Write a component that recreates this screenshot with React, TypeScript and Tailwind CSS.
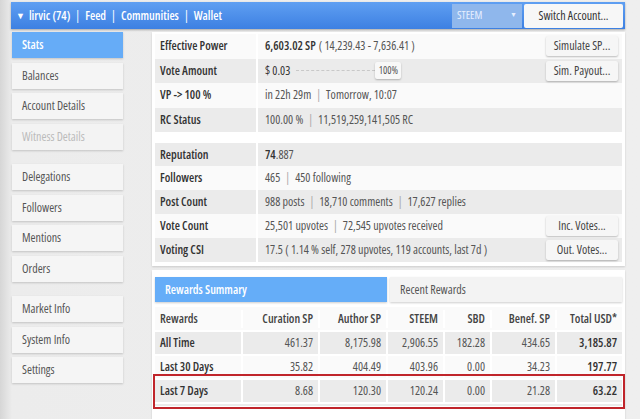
import React from "react";

const FONT = { fontFamily: '"Open Sans", "Liberation Sans", sans-serif' };

const NAV: { label: string; active?: boolean; disabled?: boolean; gap?: boolean }[] = [
  { label: "Stats", active: true },
  { label: "Balances" },
  { label: "Account Details" },
  { label: "Witness Details", disabled: true },
  { label: "Delegations", gap: true },
  { label: "Followers" },
  { label: "Mentions" },
  { label: "Orders" },
  { label: "Market Info", gap: true },
  { label: "System Info" },
  { label: "Settings" },
];

function Sep() {
  return <span className="mx-[5px] text-[#aaa]">|</span>;
}

function Btn({ children }: { children: React.ReactNode }) {
  return (
    <button
      type="button"
      className="flex h-[20px] w-[72px] items-center justify-center rounded-[2px] bg-[#f6f6f6] text-[12px] text-[#444] shadow-[0_1px_2px_rgba(0,0,0,0.25)]"
    >
      {children}
    </button>
  );
}

function StatRow({
  label,
  gray,
  h = "h-[24.5px]",
  children,
  action,
}: {
  label: string;
  gray?: boolean;
  h?: string;
  children: React.ReactNode;
  action?: React.ReactNode;
}) {
  return (
    <div className={`flex ${h} items-center ${gray ? "bg-[#ebebeb]" : "bg-[#fafafa]"}`}>
      <div className="flex h-full w-[103px] shrink-0 items-center border-r-2 border-white pl-[5px] font-semibold text-[#333]">
        {label}
      </div>
      <div className="flex h-full flex-1 items-center whitespace-nowrap pl-[7px] text-[#555] [font-stretch:80%]">
        {children}
      </div>
      {action && <div className="pr-[4px]">{action}</div>}
    </div>
  );
}

const REWARD_COLS = [
  { label: "Curation SP", w: "w-[77px]" },
  { label: "Author SP", w: "w-[68px]" },
  { label: "STEEM", w: "w-[57px]" },
  { label: "SBD", w: "w-[47px]" },
  { label: "Benef. SP", w: "w-[65px]" },
  { label: "Total USD*", w: "flex-1" },
];

const REWARD_ROWS = [
  { label: "All Time", vals: ["461.37", "8,175.98", "2,906.55", "182.28", "434.65", "3,185.87"], gray: true },
  { label: "Last 30 Days", vals: ["35.82", "404.49", "403.96", "0.00", "34.23", "197.77"] },
  { label: "Last 7 Days", vals: ["8.68", "120.30", "120.24", "0.00", "21.28", "63.22"], gray: true },
];

export default function App() {
  return (
    <div
      style={FONT}
      className="relative h-[419px] w-[640px] overflow-hidden bg-[linear-gradient(to_right,#d6d6d6_0px,#ececec_12px,#efefef_100%)] text-[12px] [font-stretch:76%]"
    >
      {/* top bar */}
      <div className="mx-[11px] mt-[2px] flex h-[27px] w-[614px] items-center bg-[linear-gradient(to_bottom,#5f9ff2,#3d80e2)] shadow-[0_1px_2px_rgba(0,0,0,0.3)]">
        <div className="flex flex-1 items-center pl-[5px] text-[12px] font-semibold text-white">
          <span className="mr-[4px] text-[9px]">▼</span>
          <span>lirvic (74)</span>
          <span className="mx-[5px] font-normal">|</span>
          <span>Feed</span>
          <span className="mx-[5px] font-normal">|</span>
          <span>Communities</span>
          <span className="mx-[5px] font-normal">|</span>
          <span>Wallet</span>
        </div>
        <div className="mr-[2px] flex h-[24px] w-[70px] items-center justify-between bg-[#8fb7ec] px-[5px] text-[11px] text-[#e7efff]">
          <span>STEEM</span>
          <span className="text-[7px]">▼</span>
        </div>
        <div className="mr-[2px] flex h-[24px] w-[99px] items-center justify-center rounded-[2px] bg-[#f7f7f7] text-[12px] text-[#333]">
          Switch Account...
        </div>
      </div>

      <div className="mt-[3px] flex">
        {/* sidebar */}
        <div className="ml-[12px] flex w-[111px] flex-col gap-[4.5px]">
          {NAV.map((n) => (
            <div
              key={n.label}
              className={`flex h-[26px] items-center pl-[10px] shadow-[0_1px_2px_rgba(0,0,0,0.18)] ${
                n.gap ? "mt-[10px]" : ""
              } ${
                n.active
                  ? "bg-[#66acf7] font-semibold text-white"
                  : n.disabled
                    ? "bg-[#f3f3f3] text-[#bbb]"
                    : "bg-[#f5f5f5] text-[#555]"
              }`}
            >
              {n.label}
            </div>
          ))}
        </div>

        {/* main */}
        <div className="ml-[29px] flex w-[473px] flex-col gap-[4px]">
          <div className="bg-white px-[3px] pb-[4px] pt-[2px] shadow-[0_1px_2px_rgba(0,0,0,0.15)]">
            <StatRow label="Effective Power" action={<Btn>Simulate SP...</Btn>}>
              <span className="font-semibold text-[#333]">6,603.02 SP</span>
              <span className="ml-[3px]">( 14,239.43 - 7,636.41 )</span>
            </StatRow>
            <StatRow label="Vote Amount" gray action={<Btn>Sim. Payout...</Btn>}>
              <span className="text-[#333]">$ 0.03</span>
              <div className="ml-[6px] h-0 w-[79px] border-t border-dashed border-[#c8c8c8]" />
              <div className="flex h-[17px] w-[26px] items-center justify-center rounded-[2px] bg-[#f8f8f8] text-[10px] text-[#555] shadow-[0_1px_2px_rgba(0,0,0,0.25)]">
                100%
              </div>
            </StatRow>
            <StatRow label="VP -> 100 %">
              in 22h 29m
              <Sep />
              Tomorrow, 10:07
            </StatRow>
            <StatRow label="RC Status" gray>
              100.00 %
              <Sep />
              11,519,259,141,505 RC
            </StatRow>
            <div className="h-[11px]" />
            <StatRow label="Reputation" gray h="h-[23px]">
              <span className="font-semibold text-[#333]">74</span>.887
            </StatRow>
            <StatRow label="Followers" h="h-[24px]">
              465
              <Sep />
              450 following
            </StatRow>
            <StatRow label="Post Count" gray h="h-[24px]">
              988 posts
              <Sep />
              18,710 comments
              <Sep />
              17,627 replies
            </StatRow>
            <StatRow label="Vote Count" h="h-[24px]" action={<Btn>Inc. Votes...</Btn>}>
              25,501 upvotes
              <Sep />
              72,545 upvotes received
            </StatRow>
            <StatRow label="Voting CSI" gray h="h-[24px]" action={<Btn>Out. Votes...</Btn>}>
              17.5 ( 1.14 % self, 278 upvotes, 119 accounts, last 7d )
            </StatRow>
          </div>

          <div className="bg-white px-[3px] pt-[7px] shadow-[0_1px_2px_rgba(0,0,0,0.15)]">
            <div className="flex h-[25px] gap-[3px]">
              <div className="flex w-[232px] items-center bg-[#65adf8] pl-[10px] font-semibold text-white shadow-[0_1px_2px_rgba(0,0,0,0.2)]">
                Rewards Summary
              </div>
              <div className="flex flex-1 items-center bg-[#f3f3f3] pl-[10px] text-[#555] shadow-[0_1px_2px_rgba(0,0,0,0.2)]">
                Recent Rewards
              </div>
            </div>
            <div className="mt-[5px]">
              <div className="flex h-[23px] items-center bg-[#fafafa] font-semibold text-[#444]">
                <div className="w-[88px] border-r-2 border-white pl-[5px]">Rewards</div>
                {REWARD_COLS.map((c) => (
                  <div key={c.label} className={`${c.w} whitespace-nowrap border-r-2 border-white pr-[5px] text-right last:border-r-0`}>
                    {c.label}
                  </div>
                ))}
              </div>
              {REWARD_ROWS.map((r) => (
                <div
                  key={r.label}
                  className={`flex h-[24px] items-center border-t-2 border-white ${r.gray ? "bg-[#ebebeb]" : "bg-[#fafafa]"}`}
                >
                  <div className="flex h-full w-[88px] items-center border-r-2 border-white pl-[5px] font-semibold text-[#333]">
                    {r.label}
                  </div>
                  {r.vals.map((v, i) => (
                    <div
                      key={i}
                      className={`${REWARD_COLS[i].w} flex h-full items-center justify-end border-r-2 border-white pr-[5px] last:border-r-0 ${
                        i === 5 ? "font-semibold text-[#333]" : "text-[#555]"
                      }`}
                    >
                      {v}
                    </div>
                  ))}
                </div>
              ))}
              <div className="h-[4px] border-t-2 border-white bg-[#ebebeb]" />
              <div className="h-[20px]" />
            </div>
          </div>
        </div>
      </div>

      {/* highlight box */}
      <div className="pointer-events-none absolute left-[153px] top-[374px] h-[35px] w-[472px] border-2 border-[#c0252b]" />
    </div>
  );
}
